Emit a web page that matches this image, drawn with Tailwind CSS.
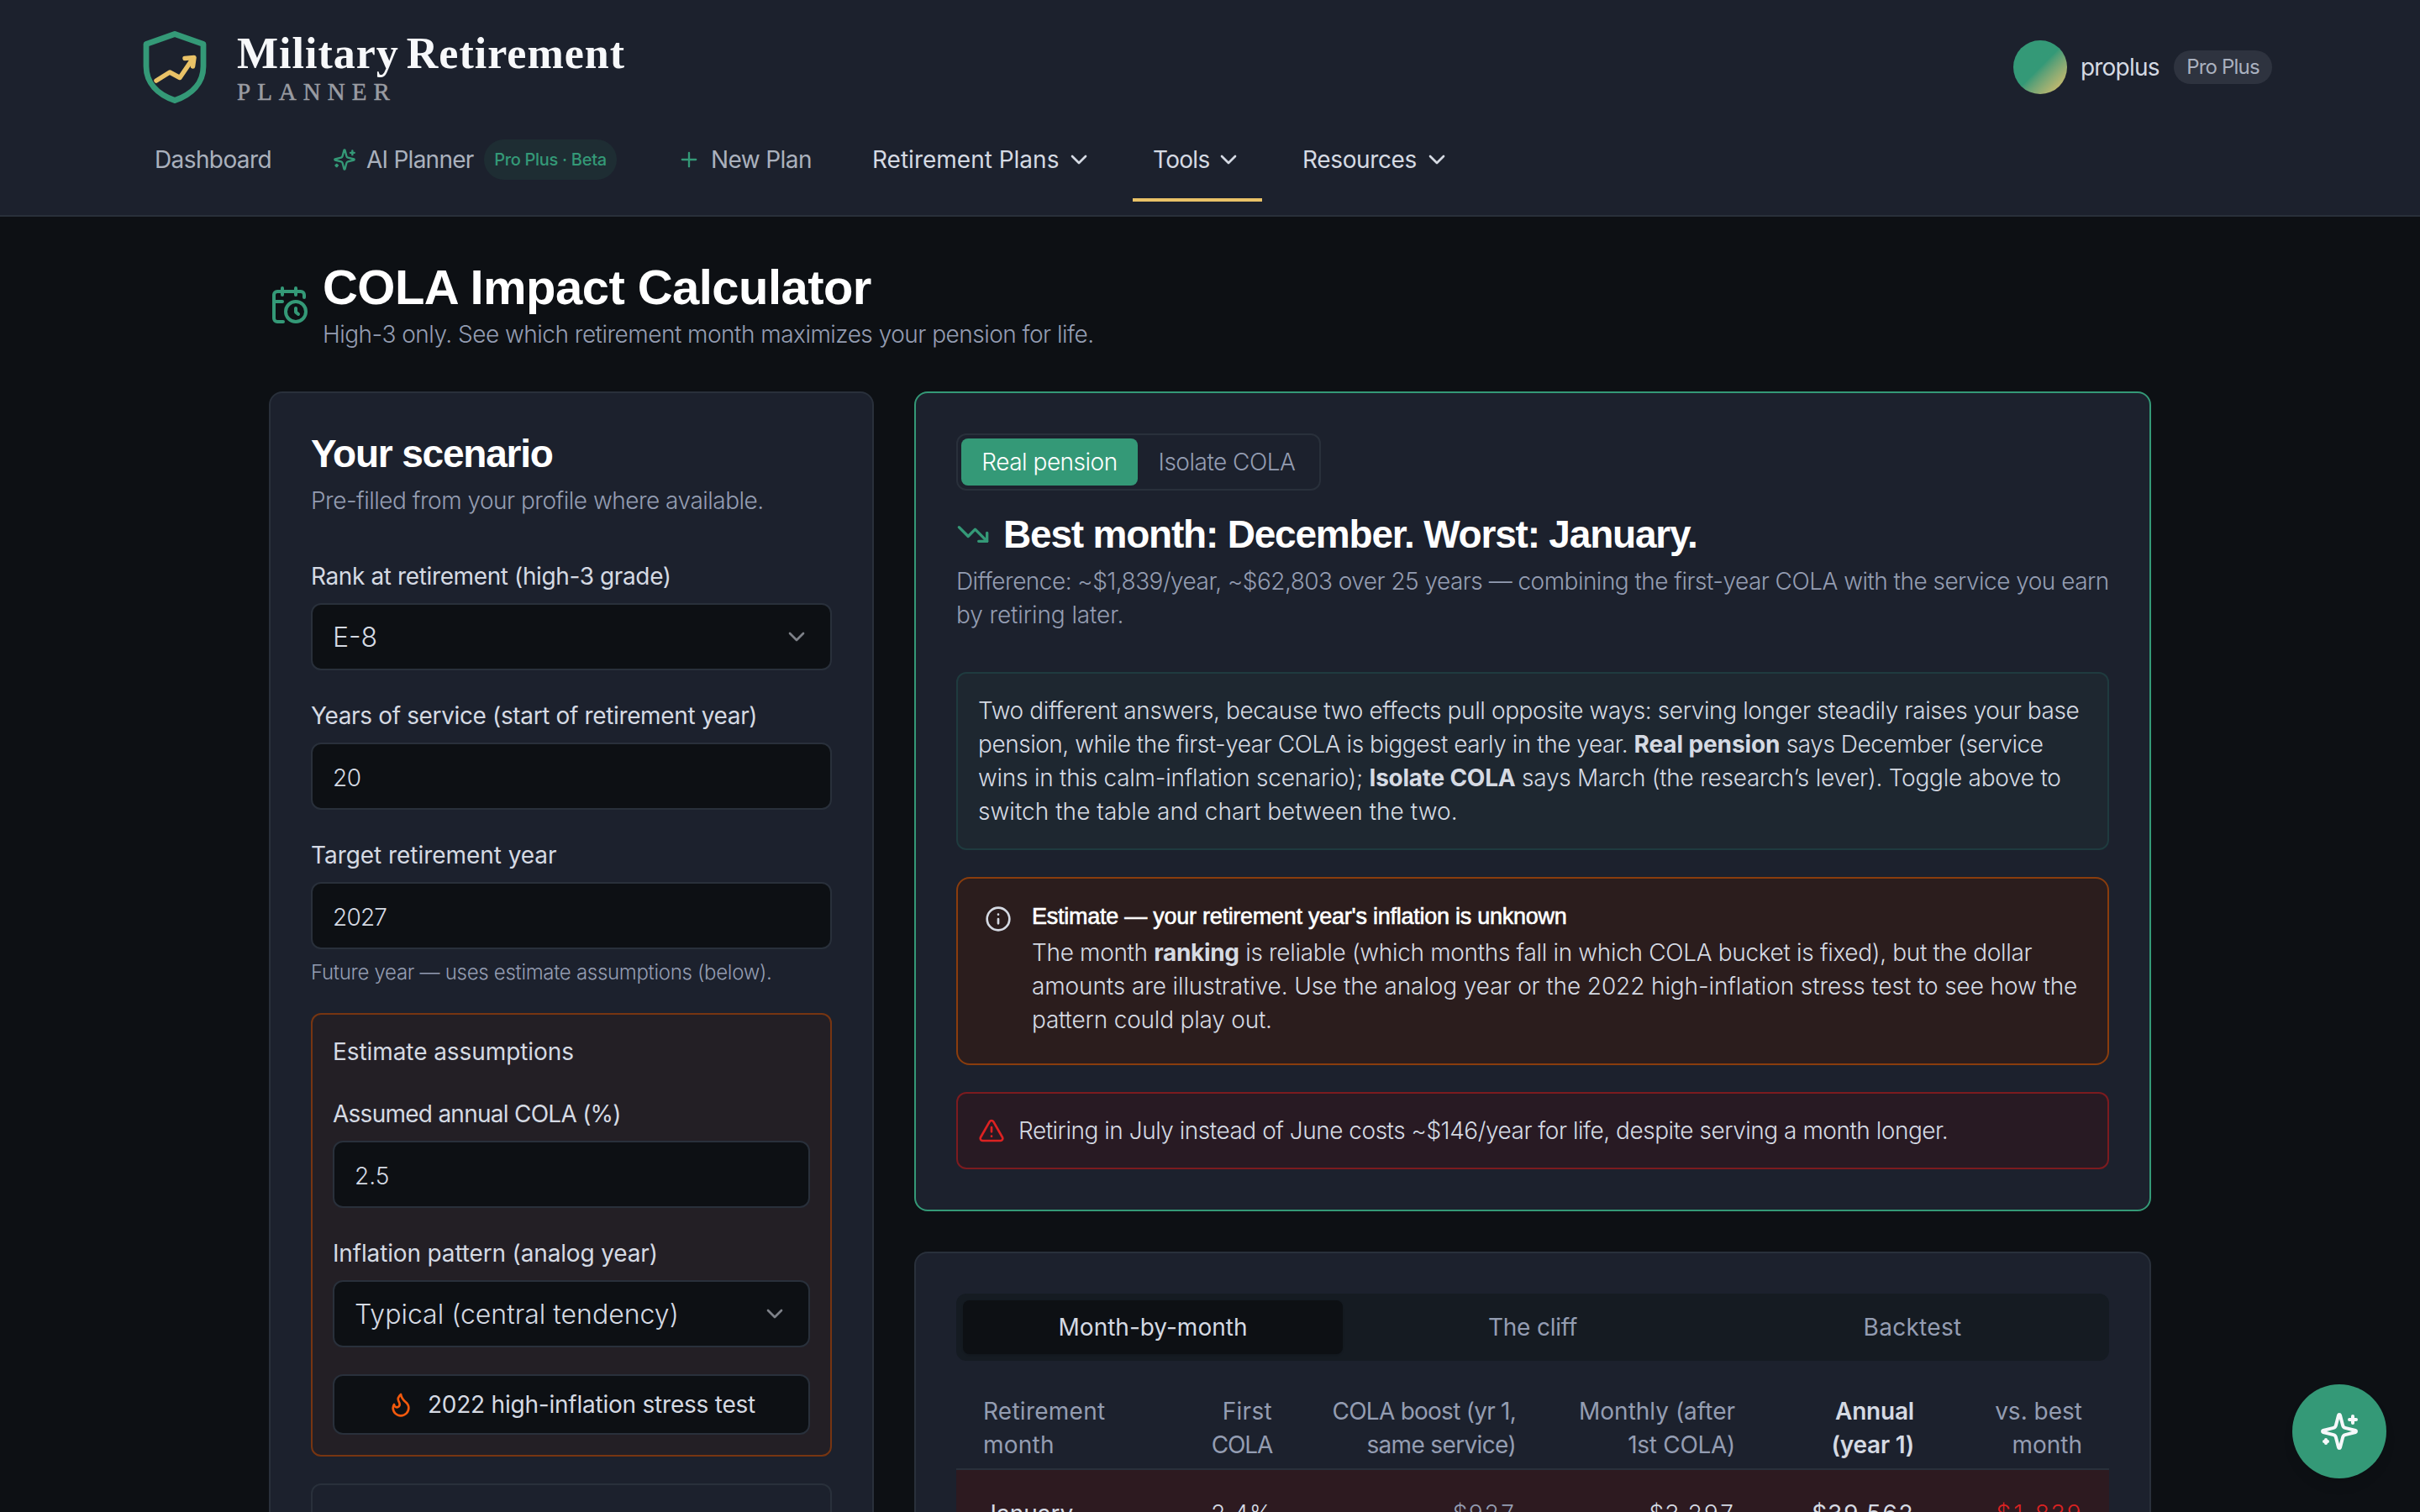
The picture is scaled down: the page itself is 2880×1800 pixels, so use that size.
<!DOCTYPE html>
<html lang="en">
<head>
  <meta charset="UTF-8">
  <meta name="viewport" content="width=device-width, initial-scale=1.0">
  <title>COLA Impact Calculator - Military Retirement Planner</title>
  <script src="https://cdn.jsdelivr.net/npm/@tailwindcss/browser@4"></script>
</head>
<body class="h-[1800px] overflow-hidden bg-[#0d1014] font-['Inter',sans-serif] text-[28px] leading-[40px] text-[#d5dae3] whitespace-nowrap">

  <!-- shared icons -->
  <svg class="hidden">
    <symbol id="sparkles" viewBox="0 0 24 24"><path d="M9.937 15.5A2 2 0 0 0 8.5 14.063l-6.135-1.582a.5.5 0 0 1 0-.962L8.5 9.936A2 2 0 0 0 9.937 8.5l1.582-6.135a.5.5 0 0 1 .963 0L14.063 8.5A2 2 0 0 0 15.5 9.937l6.135 1.581a.5.5 0 0 1 0 .964L15.5 14.063a2 2 0 0 0-1.437 1.437l-1.582 6.135a.5.5 0 0 1-.963 0z"/><path d="M20 3v4"/><path d="M22 5h-4"/><path d="M4 17v2"/><path d="M5 18H3"/></symbol>
    <symbol id="chevron" viewBox="0 0 24 24"><path d="m6 9 6 6 6-6"/></symbol>
  </svg>

  <header class="h-[258px] border-b-2 border-[#29303a] bg-[#1c212d] pt-5">
    <div class="flex h-[120px] items-center justify-between pl-[168px] pr-[176px]">
      <a class="flex items-center">
        <svg class="h-24 w-20" viewBox="0 0 80 96" fill="none" stroke-linejoin="round" stroke-linecap="round">
          <path d="M40 8.5 74 20.5V47C74 67 60 80.5 40 87.5 20 80.5 6 67 6 47V20.5Z" stroke="#349977" stroke-width="6.8"/>
          <path d="M18 64 34 54 46 60.5 62 37" stroke="#e9c267" stroke-width="5.5"/>
          <path d="M52 37.5 63 36.5 61.5 47" stroke="#e9c267" stroke-width="5.5"/>
        </svg>
        <div class="ml-[34px] flex flex-col pt-1.5 font-['Liberation_Serif',serif]">
          <span class="text-[52px] font-bold leading-10 tracking-[1px] text-[#f7f8fa] [word-spacing:-5px]">Military Retirement</span>
          <span class="mt-[11px] text-[29px] leading-7 tracking-[8px] text-[#9a9ca2] [-webkit-text-stroke:0.5px_#9a9ca2]">PLANNER</span>
        </div>
      </a>
      <div class="flex items-center">
        <div class="size-16 rounded-full bg-linear-135 from-[#349977] from-50% to-[#e9c267]"></div>
        <span class="ml-4 w-[95px] tracking-[-0.8px]">proplus</span>
        <span class="ml-4 flex h-10 w-[117px] items-center justify-center rounded-full bg-[#2e333f] text-2xl tracking-[-0.8px] text-[#aab1bf]">Pro Plus</span>
      </div>
    </div>
    <nav class="flex h-[100px] gap-6 pl-40">
      <a class="flex w-[188px] items-center pl-6 tracking-[-0.6px] text-[#aab1bd]">Dashboard</a>
      <a class="flex w-[386px] items-center px-6 tracking-[-0.75px] text-[#aab1bd]">
        <svg class="mr-3 size-7 text-[#349977]" fill="none" stroke="currentColor" stroke-width="2" stroke-linecap="round" stroke-linejoin="round"><use href="#sparkles"/></svg>
        AI Planner
        <span class="ml-auto flex h-12 w-[158px] items-center justify-center rounded-full bg-[#1e2d33] text-xl font-medium tracking-[-0.3px] text-[#349977]">Pro Plus · Beta</span>
      </a>
      <a class="flex w-[208px] items-center px-6 tracking-[-0.6px] text-[#aab1bd]">
        <svg class="mr-3 size-7 text-[#349977]" viewBox="0 0 24 24" fill="none" stroke="currentColor" stroke-width="2" stroke-linecap="round"><path d="M5 12h14M12 5v14"/></svg>
        New Plan
      </a>
      <a class="flex w-[310px] items-center justify-between px-6">Retirement Plans
        <svg class="size-8" fill="none" stroke="currentColor" stroke-width="2" stroke-linecap="round" stroke-linejoin="round"><use href="#chevron"/></svg></a>
      <a class="relative flex w-[154px] items-center justify-between px-6 tracking-[-0.7px]">Tools
        <svg class="size-8" fill="none" stroke="currentColor" stroke-width="2" stroke-linecap="round" stroke-linejoin="round"><use href="#chevron"/></svg>
        <span class="absolute inset-x-0 bottom-0 h-1 bg-[#e9c267]"></span></a>
      <a class="flex w-[224px] items-center justify-between px-6 tracking-[-0.36px]">Resources
        <svg class="size-8" fill="none" stroke="currentColor" stroke-width="2" stroke-linecap="round" stroke-linejoin="round"><use href="#chevron"/></svg></a>
    </nav>
  </header>

  <main class="mx-auto w-[2240px] pt-[50px]">
    <div class="flex h-[110px] items-center gap-4">
      <svg class="size-12 text-[#349977]" viewBox="0 0 24 24" fill="none" stroke="currentColor" stroke-width="2" stroke-linecap="round" stroke-linejoin="round"><path d="M21 7.5V6a2 2 0 0 0-2-2H5a2 2 0 0 0-2 2v14a2 2 0 0 0 2 2h3.5"/><path d="M16 2v4M8 2v4M3 10h5"/><path d="M17.5 17.5 16 16.3V14"/><circle cx="16" cy="16" r="6"/></svg>
      <div class="pt-1">
        <h1 class="font-['Liberation_Sans',sans-serif] text-[58px] font-bold leading-[60px] tracking-[-0.55px] text-white">COLA Impact Calculator</h1>
        <p class="mt-1.5 font-light tracking-[-0.51px] text-[#949db2]">High-3 only. See which retirement month maximizes your pension for life.</p>
      </div>
    </div>

    <div class="mt-12 grid grid-cols-[720px_1472px] items-start gap-12">
      <!-- scenario form -->
      <section class="rounded-2xl border-2 border-[#29303b] bg-[#1c212d] p-12">
        <h2 class="font-['Liberation_Sans',sans-serif] text-[46px] font-bold leading-[48px] tracking-[-1.2px] text-white">Your scenario</h2>
        <p class="mt-3 font-light tracking-[-0.5px] text-[#949db2]">Pre-filled from your profile where available.</p>

        <label class="mt-[50px] block tracking-[-0.38px]">Rank at retirement (high-3 grade)</label>
        <div class="mt-3 flex h-20 items-center justify-between rounded-xl border-2 border-[#29303b] bg-[#0d1014] px-6 text-[32px] font-light"><span class="pt-0.5">E-8</span>
          <svg class="size-8 text-[#7d8188]" fill="none" stroke="currentColor" stroke-width="2" stroke-linecap="round" stroke-linejoin="round"><use href="#chevron"/></svg></div>

        <label class="mt-[34px] block tracking-[-0.36px]">Years of service (start of retirement year)</label>
        <div class="mt-3 flex h-20 items-center rounded-xl border-2 border-[#29303b] bg-[#0d1014] px-6 pt-[3px] font-light tracking-[-0.5px]">20</div>

        <label class="mt-[34px] block tracking-[-0.05px]">Target retirement year</label>
        <div class="mt-3 flex h-20 items-center rounded-xl border-2 border-[#29303b] bg-[#0d1014] px-6 pt-[3px] font-light tracking-[-0.8px]">2027</div>
        <p class="mt-3 text-2xl font-light tracking-[-0.3px] text-[#949db2]">Future year — uses estimate assumptions (below).</p>

        <div class="mt-8 rounded-xl border-2 border-[#773511] bg-[#231f25] p-6">
          <div class="tracking-[-0.08px]">Estimate assumptions</div>
          <label class="mt-[34px] block tracking-[-0.74px]">Assumed annual COLA (%)</label>
          <div class="mt-3 flex h-20 items-center rounded-xl border-2 border-[#29303b] bg-[#0d1014] px-6 pt-[3px] font-light">2.5</div>
          <label class="mt-[34px] block tracking-[-0.15px]">Inflation pattern (analog year)</label>
          <div class="mt-3 flex h-20 items-center justify-between rounded-xl border-2 border-[#29303b] bg-[#0d1014] px-6 text-[32px] font-light"><span class="pt-0.5">Typical (central tendency)</span>
            <svg class="size-8 text-[#7d8188]" fill="none" stroke="currentColor" stroke-width="2" stroke-linecap="round" stroke-linejoin="round"><use href="#chevron"/></svg></div>
          <button class="mt-8 flex h-[72px] w-full items-center justify-center gap-4 rounded-xl border-2 border-[#29303b] bg-[#0d1014] tracking-[-0.22px]">
            <svg class="size-8 text-[#f2590d]" viewBox="0 0 24 24" fill="none" stroke="currentColor" stroke-width="2" stroke-linecap="round" stroke-linejoin="round"><path d="M8.5 14.5A2.5 2.5 0 0 0 11 12c0-1.38-.5-2-1-3-1.072-2.143-.224-4.054 2-6 .5 2.5 2 4.9 4 6.5 2 1.6 3 3.5 3 5.5a7 7 0 1 1-14 0c0-1.153.433-2.294 1-3a2.5 2.5 0 0 0 2.5 2.5z"/></svg>
            2022 high-inflation stress test
          </button>
        </div>
        <div class="mt-8 h-40 rounded-xl border-2 border-[#29303b]"></div>
      </section>

      <div>
        <!-- headline result -->
        <section class="rounded-2xl border-2 border-[#349977] bg-[#1c212d] p-12">
          <div class="flex h-[68px] w-[434px] items-center rounded-xl border-2 border-[#29303b] p-1 font-light tracking-[-0.5px]">
            <button class="h-14 w-[210px] rounded-lg bg-[#349977] text-white">Real pension</button>
            <button class="h-14 grow text-[#949db2]">Isolate COLA</button>
          </div>
          <h2 class="mt-7 flex items-center gap-4 font-['Liberation_Sans',sans-serif] text-[46px] font-bold leading-[48px] tracking-[-1.2px] text-white">
            <svg class="size-10 text-[#349977]" viewBox="0 0 24 24" fill="none" stroke="currentColor" stroke-width="2" stroke-linecap="round" stroke-linejoin="round"><path d="M22 17 13.5 8.5l-5 5L2 7"/><path d="M16 17h6v-6"/></svg>
            Best month: December. Worst: January.
          </h2>
          <p class="mt-3 font-light text-[#949db2]">
            <span class="tracking-[-0.525px]">Difference: ~$1,839/year, ~$62,803 over 25 years — combining the first-year COLA with the service you earn</span><br>
            <span class="tracking-[-0.1px]">by retiring later.</span>
          </p>

          <div class="mt-12 rounded-xl border-2 border-[#1f3b3f] bg-[#1e2730] p-6 font-light tracking-[-0.39px]">
            <span>Two different answers, because two effects pull opposite ways: serving longer steadily raises your base</span><br>
            <span class="tracking-[-0.47px]">pension, while the first-year COLA is biggest early in the year. <b class="font-bold tracking-[-0.1px]">Real pension</b> says December (service</span><br>
            <span class="tracking-[-0.25px]">wins in this calm-inflation scenario); <b class="font-bold">Isolate COLA</b> says March (the research’s lever). Toggle above to</span><br>
            <span class="tracking-[0.04px]">switch the table and chart between the two.</span>
          </div>

          <div class="mt-8 flex gap-6 rounded-2xl border-2 border-[#8a3d0d] bg-[#2b1d1d] p-8">
            <svg class="size-8" viewBox="0 0 24 24" fill="none" stroke="currentColor" stroke-width="2" stroke-linecap="round"><circle cx="12" cy="12" r="10"/><path d="M12 16v-4M12 8h.01"/></svg>
            <div class="font-light tracking-[-0.2px]">
              <h5 class="mb-2.5 font-['Liberation_Sans',sans-serif] text-[27px] font-normal leading-[26px] tracking-[-0.26px] text-white [-webkit-text-stroke:0.6px_white]">Estimate — your retirement year's inflation is unknown</h5>
              <span class="tracking-[-0.33px]">The month <b class="font-bold">ranking</b> is reliable (which months fall in which COLA bucket is fixed), but the dollar</span><br>
              <span class="tracking-[-0.11px]">amounts are illustrative. Use the analog year or the 2022 high-inflation stress test to see how the</span><br>
              <span>pattern could play out.</span>
            </div>
          </div>

          <div class="mt-8 flex items-center gap-4 rounded-xl border-2 border-[#7c1b1f] bg-[#281a23] p-6 font-light tracking-[-0.48px]">
            <svg class="size-8 text-[#dc2222]" viewBox="0 0 24 24" fill="none" stroke="currentColor" stroke-width="2" stroke-linecap="round" stroke-linejoin="round"><path d="m21.73 18-8-14a2 2 0 0 0-3.48 0l-8 14A2 2 0 0 0 4 21h16a2 2 0 0 0 1.73-3"/><path d="M12 9v4M12 17h.01"/></svg>
            Retiring in July instead of June costs ~$146/year for life, despite serving a month longer.
          </div>
        </section>

        <!-- monthly table -->
        <section class="mt-12 rounded-2xl border-2 border-[#29303b] bg-[#1c212d] p-12">
          <div class="grid h-20 grid-cols-3 rounded-xl bg-[#151b22] p-2 text-[#949db2]">
            <button class="rounded-lg bg-[#0d1014] text-[#d5dae3] shadow-sm">Month-by-month</button>
            <button class="tracking-[-0.2px]">The cliff</button>
            <button class="tracking-[0.3px]">Backtest</button>
          </div>
          <table class="mt-10 w-[1372px] table-fixed text-right">
            <thead class="border-b-2 border-[#29303b] text-[#949db2]">
              <tr>
                <th class="w-[241px] pb-2 pl-8 text-left font-normal tracking-[0.25px]">Retirement<br>month</th>
                <th class="w-[167px] pb-2 pr-8 font-normal"><span class="tracking-[0.3px]">First</span><br><span class="tracking-[-1.2px]">COLA</span></th>
                <th class="w-[290px] pb-2 pr-8 font-normal tracking-[-0.75px]">COLA boost (yr 1,<br><span class="tracking-[-0.65px]">same service)</span></th>
                <th class="w-[261px] pb-2 pr-8 font-normal">Monthly (after<br><span class="tracking-[-0.3px]">1st COLA)</span></th>
                <th class="w-[213px] pb-2 pr-8 font-semibold tracking-[-0.2px] text-[#d5dae3]">Annual<br>(year 1)</th>
                <th class="w-[200px] pb-2 pr-8 font-normal">vs. best<br>month</th>
              </tr>
            </thead>
            <tbody>
              <tr class="h-[104px] bg-[#2d1a20] font-light tabular-nums tracking-[0.8px]">
                <td class="pl-8 text-left font-normal tracking-normal">January</td>
                <td class="pr-8">2.4%</td>
                <td class="pr-8 text-[#949db2]">$927</td>
                <td class="pr-8">$3,297</td>
                <td class="pr-8 font-normal">$39,562</td>
                <td class="pr-8 text-[#dc2222]">-$1,839</td>
              </tr>
            </tbody>
          </table>
        </section>
      </div>
    </div>
  </main>

  <button class="fixed right-10 bottom-10 flex size-28 items-center justify-center rounded-full bg-[#349977] text-[#f7f8fa] shadow-lg">
    <svg class="size-12" fill="none" stroke="currentColor" stroke-width="2" stroke-linecap="round" stroke-linejoin="round"><use href="#sparkles"/></svg>
  </button>
</body>
</html>
